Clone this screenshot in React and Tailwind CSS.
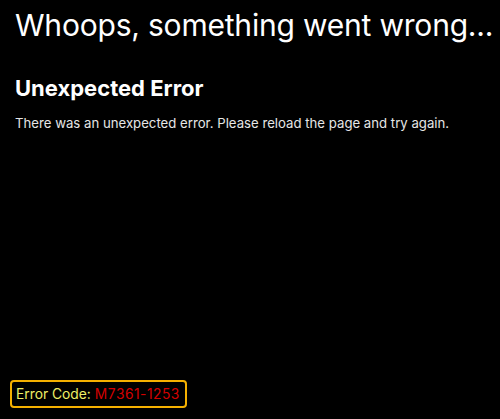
export default function App() {
  return (
    <div className="w-[500px] h-[419px] bg-black text-white flex flex-col overflow-hidden" style={{ fontFamily: 'Inter, "Noto Sans", sans-serif' }}>
      <div className="px-[15px] pt-[6px]">
        <h1 className="text-[30px] leading-[38px] font-normal whitespace-nowrap tracking-[-0.2px]">Whoops, something went wrong...</h1>
        <h2 className="mt-[30px] text-[22px] leading-[28px] font-bold">Unexpected Error</h2>
        <p className="mt-[12px] text-[13.2px] leading-[18px] text-[#e6e6e6] whitespace-nowrap">There was an unexpected error. Please reload the page and try again.</p>
      </div>
      <div className="mt-auto mb-[11px] ml-[10px] self-start border-2 border-[#f5b000] rounded-[4px] pl-[4px] pr-[5px] h-[28px] flex items-center text-[13.8px]">
        <span className="text-[#eeee66]">Error Code:</span>
        <span className="ml-[4px] text-[#d40000] tracking-[0.5px]">M7361-1253</span>
      </div>
    </div>
  );
}
